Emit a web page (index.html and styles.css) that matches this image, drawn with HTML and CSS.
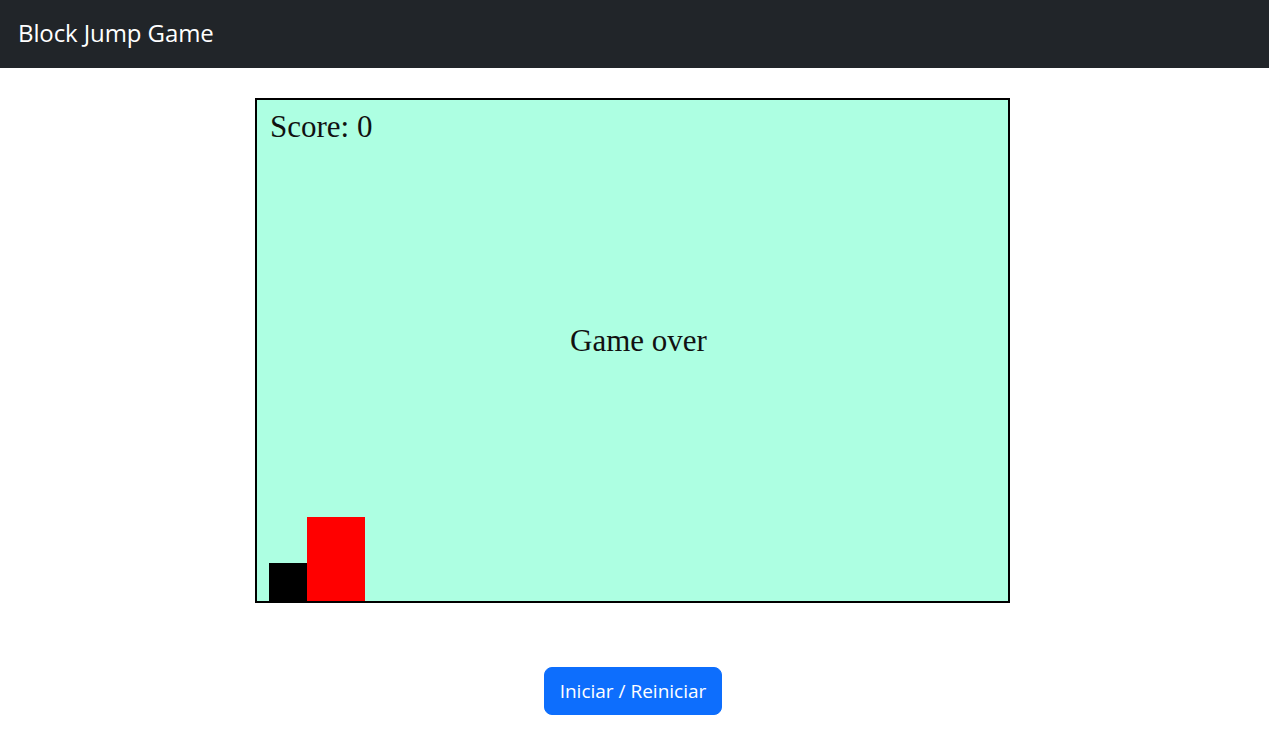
FILE: index.html
```html
<!DOCTYPE html>
<html lang="es">
<head>
<meta charset="utf-8">
<title>Block Jump Game</title>
<link rel="stylesheet" href="styles.css">
</head>
<body>
<nav class="navbar">
  <span class="brand">Block Jump Game</span>
</nav>
<main class="main">
  <div class="game">
    <div class="score">Score: 0</div>
    <div class="message">Game over</div>
    <div class="player"></div>
    <div class="obstacle"></div>
  </div>
  <button class="btn">Iniciar / Reiniciar</button>
</main>
</body>
</html>
```

FILE: styles.css
```css
* { box-sizing: border-box; }
html, body { margin: 0; padding: 0; background: #fff; }
body { font-family: "Open Sans", "Noto Sans", sans-serif; }
.navbar {
  height: 68px;
  background: #212529;
  display: flex;
  align-items: center;
  padding: 0 18px;
}
.brand {
  color: #fff;
  font-size: 24px;
  letter-spacing: -0.1px;
  line-height: 1;
  position: relative;
  top: -1px;
}
.main {
  display: flex;
  flex-direction: column;
  align-items: center;
  padding-top: 30px;
}
.game {
  position: relative;
  width: 755px;
  height: 505px;
  border: 2px solid #000;
  background: #adffe2;
  margin-right: 4px;
  font-family: "Liberation Serif", "Times New Roman", serif;
  color: #111;
}
.score {
  position: absolute;
  left: 13px;
  top: 11px;
  font-size: 31px;
  line-height: 1;
}
.message {
  position: absolute;
  left: 0;
  right: 0;
  top: 225px;
  text-align: center;
  font-size: 31px;
  line-height: 1;
  padding-left: 12px;
}
.player {
  position: absolute;
  left: 12px;
  bottom: 0;
  width: 38px;
  height: 38px;
  background: #000;
}
.obstacle {
  position: absolute;
  left: 50px;
  bottom: 0;
  width: 58px;
  height: 84px;
  background: #ff0000;
}
.btn {
  margin-top: 64px;
  height: 48px;
  padding: 0 15px;
  background: #0d6efd;
  color: #fff;
  border: 1px solid #0d6efd;
  border-radius: 8px;
  font-family: "Open Sans", "Noto Sans", sans-serif;
  font-size: 19px;
  margin-right: 3px;
}
```
